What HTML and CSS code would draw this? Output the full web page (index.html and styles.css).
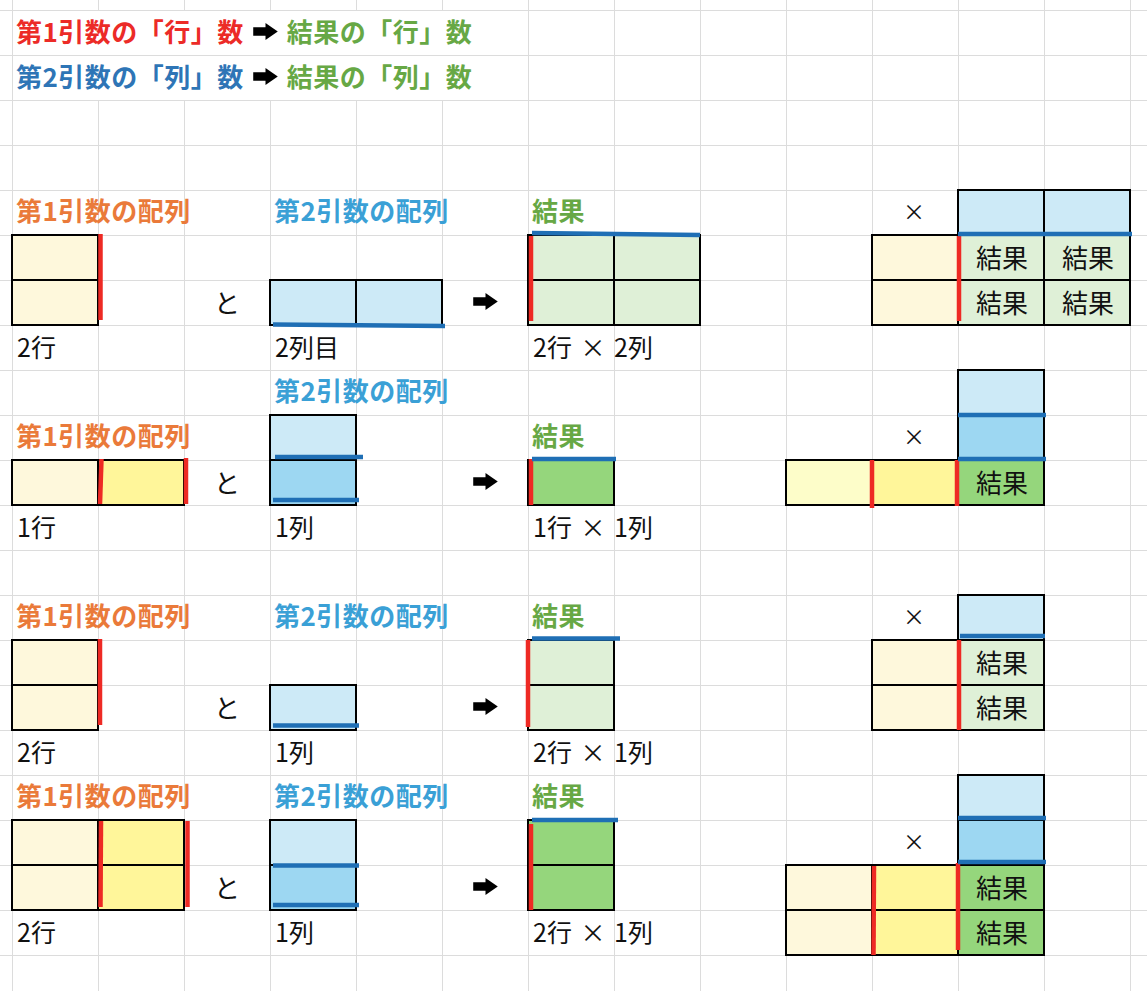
FILE: index.html
```html
<!DOCTYPE html>
<html lang="ja">
<head>
<meta charset="utf-8">
<title>配列の掛け算</title>
<link rel="stylesheet" href="styles.css">
</head>
<body>
<div class="sheet">
  <!-- titles -->
  <div class="title c1 r1"><span class="red">第1引数の「行」数</span><svg class="arrow big" viewBox="0 0 26 18"><path d="M0 4.5H13V0L26 9L13 18V13.5H0Z"/></svg><span class="green">結果の「行」数</span></div>
  <div class="title c1 r2"><span class="blue">第2引数の「列」数</span><svg class="arrow big" viewBox="0 0 26 18"><path d="M0 4.5H13V0L26 9L13 18V13.5H0Z"/></svg><span class="green">結果の「列」数</span></div>

  <!-- section 1 -->
  <div class="t hd-o c1 r5">第1引数の配列</div>
  <div class="t hd-b c4 r5">第2引数の配列</div>
  <div class="t hd-g c7 r5">結果</div>
  <div class="ctr times c11 r5">×</div>
  <div class="box lblue c12 r5"></div>
  <div class="box lblue c13 r5"></div>
  <div class="box cream c1 r6"></div>
  <div class="box cream c1 r7"></div>
  <div class="ctr c3 r7">と</div>
  <div class="box lblue c4 r7"></div>
  <div class="box lblue c5 r7"></div>
  <div class="ctr c6 r7"><svg class="arrow" viewBox="0 0 26 18"><path d="M0 4.5H13V0L26 9L13 18V13.5H0Z"/></svg></div>
  <div class="box lgreen c7 r6"></div>
  <div class="box lgreen c8 r6"></div>
  <div class="box lgreen c7 r7"></div>
  <div class="box lgreen c8 r7"></div>
  <div class="box cream c11 r6"></div>
  <div class="box cream c11 r7"></div>
  <div class="box lgreen c12 r6">結果</div>
  <div class="box lgreen c13 r6">結果</div>
  <div class="box lgreen c12 r7">結果</div>
  <div class="box lgreen c13 r7">結果</div>
  <div class="t c1 r8">2行</div>
  <div class="t c4 r8">2列目</div>
  <div class="t c7 r8">2行 × 2列</div>

  <!-- section 2 -->
  <div class="t hd-b c4 r9">第2引数の配列</div>
  <div class="box lblue c12 r9"></div>
  <div class="t hd-o c1 r10">第1引数の配列</div>
  <div class="box lblue c4 r10"></div>
  <div class="t hd-g c7 r10">結果</div>
  <div class="ctr times c11 r10">×</div>
  <div class="box dblue c12 r10"></div>
  <div class="box cream c1 r11"></div>
  <div class="box yellow c2 r11"></div>
  <div class="ctr c3 r11">と</div>
  <div class="box dblue c4 r11"></div>
  <div class="ctr c6 r11"><svg class="arrow" viewBox="0 0 26 18"><path d="M0 4.5H13V0L26 9L13 18V13.5H0Z"/></svg></div>
  <div class="box dgreen c7 r11"></div>
  <div class="box pale c10 r11"></div>
  <div class="box yellow c11 r11"></div>
  <div class="box dgreen c12 r11">結果</div>
  <div class="t c1 r12">1行</div>
  <div class="t c4 r12">1列</div>
  <div class="t c7 r12">1行 × 1列</div>

  <!-- section 3 -->
  <div class="t hd-o c1 r14">第1引数の配列</div>
  <div class="t hd-b c4 r14">第2引数の配列</div>
  <div class="t hd-g c7 r14">結果</div>
  <div class="ctr times c11 r14">×</div>
  <div class="box lblue c12 r14"></div>
  <div class="box cream c1 r15"></div>
  <div class="box cream c1 r16"></div>
  <div class="ctr c3 r16">と</div>
  <div class="box lblue c4 r16"></div>
  <div class="ctr c6 r16"><svg class="arrow" viewBox="0 0 26 18"><path d="M0 4.5H13V0L26 9L13 18V13.5H0Z"/></svg></div>
  <div class="box lgreen c7 r15"></div>
  <div class="box lgreen c7 r16"></div>
  <div class="box cream c11 r15"></div>
  <div class="box cream c11 r16"></div>
  <div class="box lgreen c12 r15">結果</div>
  <div class="box lgreen c12 r16">結果</div>
  <div class="t c1 r17">2行</div>
  <div class="t c4 r17">1列</div>
  <div class="t c7 r17">2行 × 1列</div>

  <!-- section 4 -->
  <div class="t hd-o c1 r18">第1引数の配列</div>
  <div class="t hd-b c4 r18">第2引数の配列</div>
  <div class="t hd-g c7 r18">結果</div>
  <div class="box lblue c12 r18"></div>
  <div class="box cream c1 r19"></div>
  <div class="box yellow c2 r19"></div>
  <div class="box cream c1 r20"></div>
  <div class="box yellow c2 r20"></div>
  <div class="box lblue c4 r19"></div>
  <div class="box dblue c4 r20"></div>
  <div class="ctr times c11 r19">×</div>
  <div class="box dblue c12 r19"></div>
  <div class="box dgreen c7 r19"></div>
  <div class="box dgreen c7 r20"></div>
  <div class="ctr c3 r20">と</div>
  <div class="ctr c6 r20"><svg class="arrow" viewBox="0 0 26 18"><path d="M0 4.5H13V0L26 9L13 18V13.5H0Z"/></svg></div>
  <div class="box cream c10 r20"></div>
  <div class="box yellow c11 r20"></div>
  <div class="box dgreen c12 r20">結果</div>
  <div class="box cream c10 r21"></div>
  <div class="box yellow c11 r21"></div>
  <div class="box dgreen c12 r21">結果</div>
  <div class="t c1 r21">2行</div>
  <div class="t c4 r21">1列</div>
  <div class="t c7 r21">2行 × 1列</div>

  <!-- hand-drawn marks over the cells -->
  <svg class="marks" viewBox="0 0 1147 991" width="1147" height="991">
    <g class="mk-red">
      <line x1="100.5" y1="234" x2="100.5" y2="320"/>
      <line x1="531" y1="236" x2="531" y2="321"/>
      <line x1="959" y1="236" x2="959" y2="321"/>
      <line x1="101.5" y1="459" x2="100" y2="504"/>
      <line x1="186" y1="458" x2="186" y2="504"/>
      <line x1="531" y1="459" x2="531" y2="505"/>
      <line x1="872" y1="460" x2="872" y2="508"/>
      <line x1="957" y1="460" x2="957" y2="506"/>
      <line x1="100" y1="639" x2="100" y2="725"/>
      <line x1="528" y1="640" x2="528" y2="727"/>
      <line x1="959" y1="640" x2="959" y2="730"/>
      <line x1="101" y1="821" x2="100.5" y2="907"/>
      <line x1="187.5" y1="821" x2="187.5" y2="907"/>
      <line x1="531" y1="824" x2="531" y2="910"/>
      <line x1="874" y1="866" x2="873.5" y2="955"/>
      <line x1="958" y1="863" x2="958" y2="950"/>
    </g>
    <g class="mk-blue">
      <line x1="273" y1="324.5" x2="445" y2="326"/>
      <line x1="532" y1="233" x2="700" y2="235"/>
      <line x1="958" y1="234" x2="1132" y2="234"/>
      <line x1="275" y1="457" x2="363" y2="457"/>
      <line x1="273" y1="500" x2="359" y2="500"/>
      <line x1="532" y1="459" x2="616" y2="459"/>
      <line x1="958" y1="415" x2="1046" y2="415"/>
      <line x1="958" y1="459" x2="1046" y2="459"/>
      <line x1="273" y1="725.5" x2="359" y2="725.5"/>
      <line x1="532" y1="638.5" x2="620" y2="638.5"/>
      <line x1="960" y1="636" x2="1045" y2="636"/>
      <line x1="273" y1="865.5" x2="359" y2="865.5"/>
      <line x1="273" y1="905" x2="359" y2="905"/>
      <line x1="532" y1="820" x2="618" y2="820"/>
      <line x1="958" y1="818" x2="1046" y2="818"/>
      <line x1="958" y1="862" x2="1046" y2="862"/>
    </g>
  </svg>
</div>
</body>
</html>
```

FILE: styles.css
```css
html, body {
  margin: 0;
  padding: 0;
  background: #fff;
}

.sheet {
  position: relative;
  width: 1147px;
  height: 991px;
  overflow: hidden;
  display: grid;
  grid-template-columns: 12px repeat(13, 86px) 1fr;
  grid-template-rows: 10px repeat(21, 45px) 1fr;
  font-family: "Noto Sans CJK JP", "Noto Sans", sans-serif;
  font-size: 25px;
  color: #111;
  background-color: #fff;
  background-image:
    linear-gradient(90deg, #dcdcdc 1px, transparent 1px),
    linear-gradient(180deg, #dcdcdc 1px, transparent 1px);
  background-size: 86px 100%, 100% 45px;
  background-position: 12px 0, 0 10px;
}

/* column placement */
.c1 { grid-column: 2; }
.c2 { grid-column: 3; }
.c3 { grid-column: 4; }
.c4 { grid-column: 5; }
.c5 { grid-column: 6; }
.c6 { grid-column: 7; }
.c7 { grid-column: 8; }
.c8 { grid-column: 9; }
.c10 { grid-column: 11; }
.c11 { grid-column: 12; }
.c12 { grid-column: 13; }
.c13 { grid-column: 14; }

/* row placement */
.r1 { grid-row: 2; }
.r2 { grid-row: 3; }
.r5 { grid-row: 6; }
.r6 { grid-row: 7; }
.r7 { grid-row: 8; }
.r8 { grid-row: 9; }
.r9 { grid-row: 10; }
.r10 { grid-row: 11; }
.r11 { grid-row: 12; }
.r12 { grid-row: 13; }
.r14 { grid-row: 15; }
.r15 { grid-row: 16; }
.r16 { grid-row: 17; }
.r17 { grid-row: 18; }
.r18 { grid-row: 19; }
.r19 { grid-row: 20; }
.r20 { grid-row: 21; }
.r21 { grid-row: 22; }

/* merged title cells */
.title {
  grid-column: 2 / 8;
  margin: 1px 0 0 1px;
  background: #fff;
  display: flex;
  align-items: center;
  padding: 0 0 5px 3px;
  font-size: 26px;
  font-weight: 700;
  white-space: nowrap;
  letter-spacing: 0.5px;
}
.red { color: #ec2b27; }
.blue { color: #2e75b6; }
.green { color: #67a845; }

.arrow {
  width: 25px;
  height: 17px;
  fill: #000;
  display: block;
}
.arrow.big {
  width: 27px;
  height: 17px;
  margin: 2px 8px 0 8px;
}

/* plain text cells */
.t {
  display: flex;
  align-items: center;
  padding: 0 0 2px 5px;
  white-space: nowrap;
  line-height: 1;
  word-spacing: 3px;
  position: relative;
  z-index: 1;
}
.hd-o, .hd-b, .hd-g {
  font-size: 26px;
  font-weight: 700;
  padding-left: 4px;
  padding-bottom: 6px;
  letter-spacing: 0.5px;
  word-spacing: 0;
}
.hd-o { color: #ea7a3a; }
.hd-b { color: #3aa0d6; }
.hd-g { color: #67a845; }

.ctr {
  display: flex;
  align-items: center;
  justify-content: center;
  line-height: 1;
  padding-bottom: 2px;
  font-size: 26px;
}
.times {
  font-size: 22px;
  padding-bottom: 6px;
  padding-right: 2px;
}

/* bordered, filled cells */
.box {
  margin: -1px;
  border: 2px solid #000;
  display: flex;
  align-items: center;
  justify-content: center;
  line-height: 1;
  font-size: 26px;
  padding: 0 0 2px 2px;
}
.cream { background: #fef8dc; }
.yellow { background: #fff69a; }
.pale { background: #fdfdc9; }
.lblue { background: #cdeaf7; }
.dblue { background: #9dd7f2; }
.lgreen { background: #dff0d7; }
.dgreen { background: #95d67c; }

/* hand-drawn marks overlay */
.marks {
  position: absolute;
  left: 0;
  top: 0;
  pointer-events: none;
  z-index: 2;
}
.mk-red line {
  stroke: #ee2a24;
  stroke-width: 4.5;
}
.mk-blue line {
  stroke: #1f6fb5;
  stroke-width: 4.5;
}
```
